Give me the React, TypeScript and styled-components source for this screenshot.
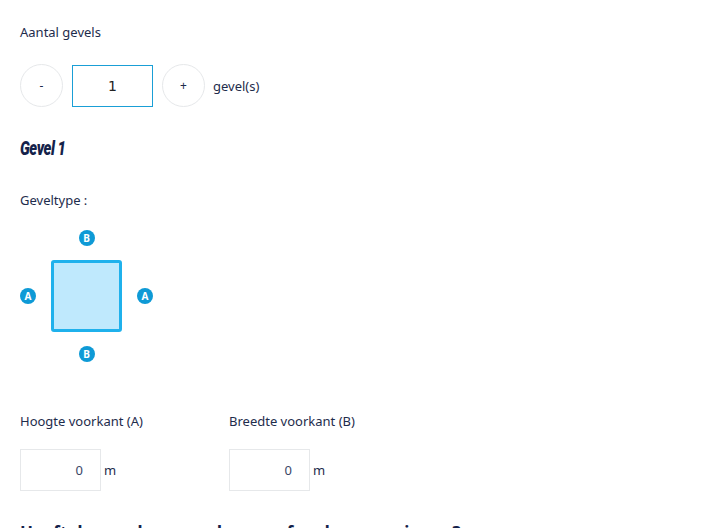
import React from "react";
import styled, { createGlobalStyle } from "styled-components";

const Global = createGlobalStyle`
  html, body { margin: 0; padding: 0; background: #ffffff; }
  body { font-family: "Noto Sans", "Open Sans", sans-serif; color: #1e2c4c; overflow: hidden; }
  * { box-sizing: border-box; }
`;

const Page = styled.div`
  padding: 22px 20px 0 20px;
  display: flex;
  flex-direction: column;
  height: 528px;
  overflow: hidden;
`;

const Label = styled.div<{ $mt?: number }>`
  font-size: 13px;
  line-height: 20px;
  color: #1e2c4c;
  margin-top: ${(p) => p.$mt ?? 0}px;
`;

const CounterRow = styled.div`
  display: flex;
  align-items: center;
  gap: 9px;
  margin-top: 22px;
`;

const RoundButton = styled.button`
  width: 43px;
  height: 43px;
  border-radius: 50%;
  border: 1px solid #e6e8ea;
  background: #fff;
  color: #1e2c4c;
  font-family: "Noto Sans", sans-serif;
  font-size: 12px;
  display: flex;
  align-items: center;
  justify-content: center;
  padding: 0;
`;

const CountBox = styled.div`
  width: 81px;
  height: 42px;
  border: 1px solid #1a9fd6;
  display: flex;
  align-items: center;
  justify-content: center;
  font-family: "DejaVu Sans", sans-serif;
  font-size: 14px;
  color: #222;
`;

const Unit = styled.span`
  font-size: 13px;
  color: #1e2c4c;
  margin-left: -1px;
`;

const Heading = styled.div`
  margin-top: 29px;
  font-family: "Roboto", sans-serif;
  font-weight: 900;
  font-style: italic;
  font-size: 20px;
  line-height: 24px;
  color: #14224a;
  letter-spacing: -0.6px;
  transform: scaleX(0.74);
  transform-origin: left center;
`;

const Diagram = styled.div`
  margin-top: 20px;
  display: grid;
  grid-template-columns: 16px 71px 16px;
  grid-template-rows: 16px 72px 16px;
  column-gap: 15px;
  row-gap: 14px;
  align-items: center;
  justify-items: center;
`;

const Badge = styled.div<{ $col: number; $row: number }>`
  grid-column: ${(p) => p.$col};
  grid-row: ${(p) => p.$row};
  width: 16px;
  height: 16px;
  border-radius: 50%;
  background: #0e9ad6;
  color: #fff;
  font-family: "Noto Sans", sans-serif;
  font-weight: 700;
  font-size: 10px;
  line-height: 16px;
  text-align: center;
`;

const Square = styled.div`
  grid-column: 2;
  grid-row: 2;
  width: 71px;
  height: 72px;
  border: 3px solid #1fb1ec;
  border-radius: 3px;
  background: #bfe9fd;
`;

const Fields = styled.div`
  display: flex;
  gap: 20px;
  margin-top: 49px;
`;

const Field = styled.div`
  width: 189px;
  display: flex;
  flex-direction: column;
`;

const InputRow = styled.div`
  display: flex;
  align-items: center;
  gap: 4px;
  margin-top: 18px;
`;

const NumBox = styled.div`
  width: 81px;
  height: 42px;
  border: 1px solid #e6e8ea;
  display: flex;
  align-items: center;
  justify-content: flex-end;
  padding-right: 17px;
  font-size: 13px;
  color: #3a4766;
`;

const Question = styled.div`
  margin-top: 30px;
  font-family: "Noto Sans", sans-serif;
  font-weight: 700;
  font-size: 17px;
  line-height: 24px;
  color: #14224a;
  white-space: nowrap;
`;

export default function App() {
  return (
    <>
      <Global />
      <Page>
        <Label>Aantal gevels</Label>
        <CounterRow>
          <RoundButton>-</RoundButton>
          <CountBox>1</CountBox>
          <RoundButton>+</RoundButton>
          <Unit>gevel(s)</Unit>
        </CounterRow>
        <Heading>Gevel 1</Heading>
        <Label $mt={30}>Geveltype :</Label>
        <Diagram>
          <Badge $col={2} $row={1}>B</Badge>
          <Badge $col={1} $row={2}>A</Badge>
          <Square />
          <Badge $col={3} $row={2}>A</Badge>
          <Badge $col={2} $row={3}>B</Badge>
        </Diagram>
        <Fields>
          <Field>
            <Label>Hoogte voorkant (A)</Label>
            <InputRow>
              <NumBox>0</NumBox>
              <Unit>m</Unit>
            </InputRow>
          </Field>
          <Field>
            <Label>Breedte voorkant (B)</Label>
            <InputRow>
              <NumBox>0</NumBox>
              <Unit>m</Unit>
            </InputRow>
          </Field>
        </Fields>
        <Question>Heeft de gevel ramen, deuren of andere openingen?</Question>
      </Page>
    </>
  );
}
